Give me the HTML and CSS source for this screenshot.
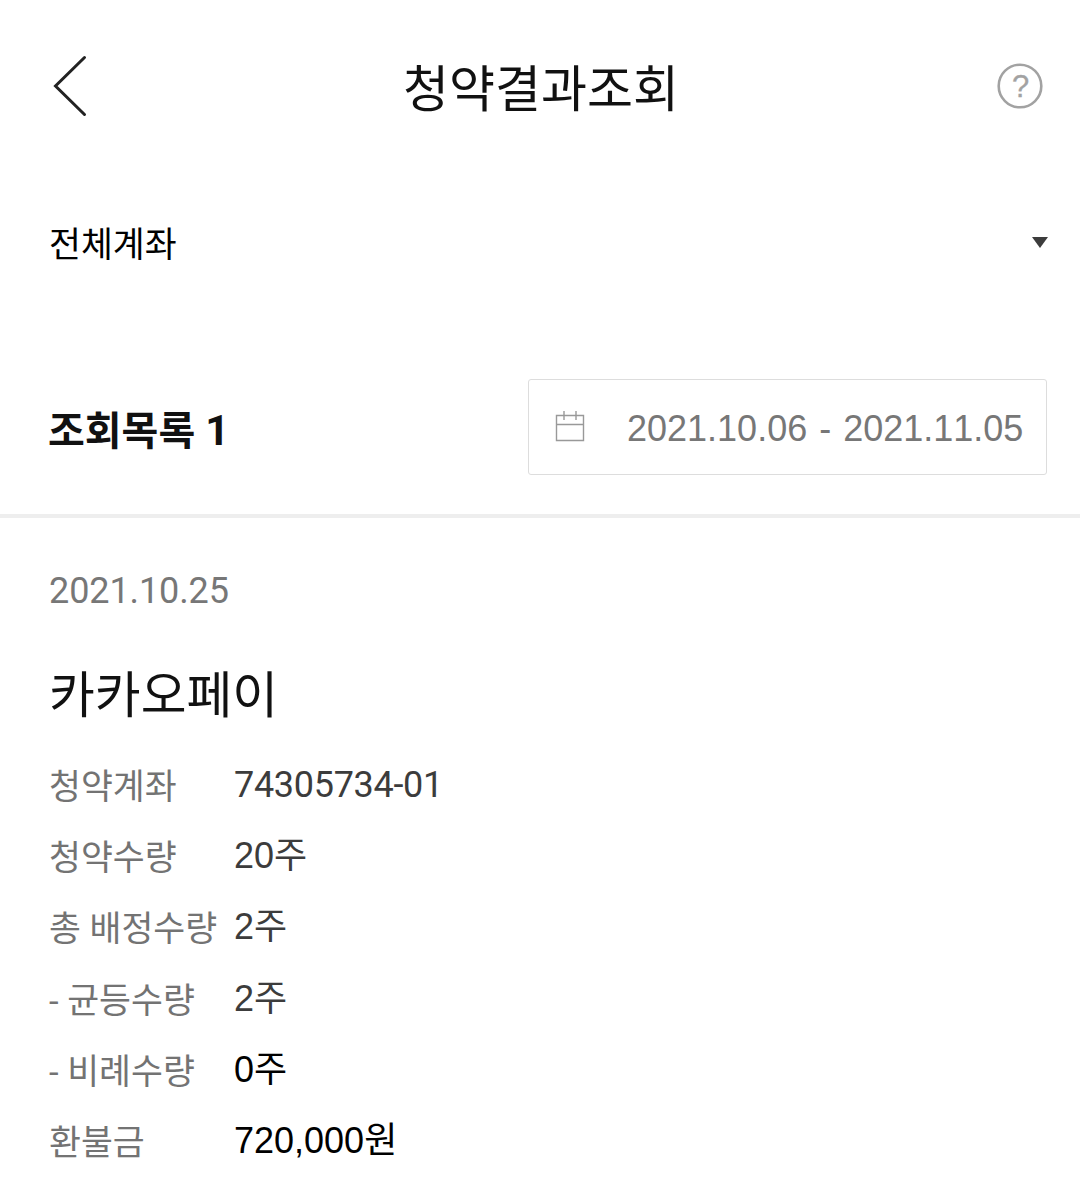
FILE: index.html
```html
<!DOCTYPE html>
<html lang="ko">
<head>
<meta charset="utf-8">
<title>청약결과조회</title>
<link rel="stylesheet" href="styles.css">
</head>
<body>
<header class="topbar">
  <svg class="back" width="36" height="62" viewBox="0 0 36 62"><path d="M32.500 2.500L3.500 31L32.500 59.500"/></svg>
  <h1 class="title">청약결과조회</h1>
  <svg class="help" width="46" height="46" viewBox="0 0 46 46"><circle cx="23" cy="23" r="21.300"/><text x="23.500" y="34" text-anchor="middle">?</text></svg>
</header>
<div class="account">
  <span class="account-name">전체계좌</span>
  <svg class="caret" width="16" height="11" viewBox="0 0 16 11"><path d="M0 0H16L8 11Z"/></svg>
</div>
<section class="filter">
  <h2 class="count">조회목록 <span class="count-number">1</span></h2>
  <div class="period">
    <svg class="calendar" width="30" height="32" viewBox="0 0 30 32"><path d="M1.500 4.500H28.500V29.500H1.500ZM1.500 13.500H28.500M9 0V9M21 0V9"/></svg>
    <span class="range">2021.10.06 - 2021.11.05</span>
  </div>
</section>
<main class="result">
  <time class="date">2021.10.25</time>
  <h3 class="stock">카카오페이</h3>
  <dl class="details">
    <dt>청약계좌</dt><dd class="number">74305734-01</dd>
    <dt>청약수량</dt><dd>20주</dd>
    <dt>총 배정수량</dt><dd>2주</dd>
    <dt>- 균등수량</dt><dd>2주</dd>
    <dt>- 비례수량</dt><dd class="strong">0주</dd>
    <dt>환불금</dt><dd class="strong">720,000원</dd>
  </dl>
</main>
</body>
</html>
```
FILE: styles.css
```css
* { box-sizing: border-box; }
body { margin: 0; background: #fff; color: #111; font-family: Roboto, "Noto Sans CJK KR", sans-serif; }
h1, h2, h3, dl, dd { margin: 0; font-weight: 400; }
svg { display: block; fill: none; }
.topbar { height: 172px; padding: 0 37px; display: grid; grid-template-columns: 46px 1fr 46px; align-items: center; }
.back { margin-left: 15px; stroke: #222; stroke-width: 3; stroke-linecap: round; }
.title { padding: 8px 0 0 2px; font-size: 50px; line-height: 60px; text-align: center; }
.help { stroke: #a2a2a2; stroke-width: 2.6; }
.help text { fill: #a2a2a2; stroke-width: 0.3; font: 31px "Liberation Sans", sans-serif; }
.account { height: 144px; padding: 0 32px 0 49px; display: flex; align-items: center; justify-content: space-between; }
.account-name { padding-top: 2px; font-size: 34.7px; line-height: 48px; color: #000; }
.caret { fill: #3c3c3c; margin-bottom: 3px; }
.filter { height: 202px; padding: 63px 33px 0 48px; border-bottom: 4px solid #eee; display: flex; justify-content: space-between; align-items: flex-start; }
.count { margin-top: 4px; font-size: 40px; line-height: 96px; font-weight: 700; }
.count-number { font-size: 42px; }
.period { width: 519px; height: 96px; border: 1px solid #ddd; border-radius: 3px; display: flex; align-items: center; padding-left: 26px; gap: 42px; }
.calendar { stroke: #999; stroke-width: 1.4; }
.range { padding-top: 3px; font: 36px/48px "Liberation Sans", sans-serif; font-kerning: none; word-spacing: 2px; color: #777; white-space: nowrap; }
.result { padding: 49px 49px 0; }
.date { display: block; font-size: 36px; line-height: 48px; letter-spacing: -0.1px; color: #777; }
.stock { margin-top: 49px; font-size: 49.8px; line-height: 64px; }
.details { display: grid; grid-template-columns: 185px 1fr; grid-auto-rows: 71.2px; margin-top: 22px; font-size: 34.7px; line-height: 71px; }
dt { padding-top: 2px; height: 71px; color: #737373; white-space: nowrap; }
dd { color: #3c3c3c; font-size: 36px; line-height: 70px; font-family: "Liberation Sans", "Noto Sans CJK KR", sans-serif; }
.number { line-height: 71px; font-family: Roboto, sans-serif; letter-spacing: -0.3px; }
.strong { color: #000; }
```
